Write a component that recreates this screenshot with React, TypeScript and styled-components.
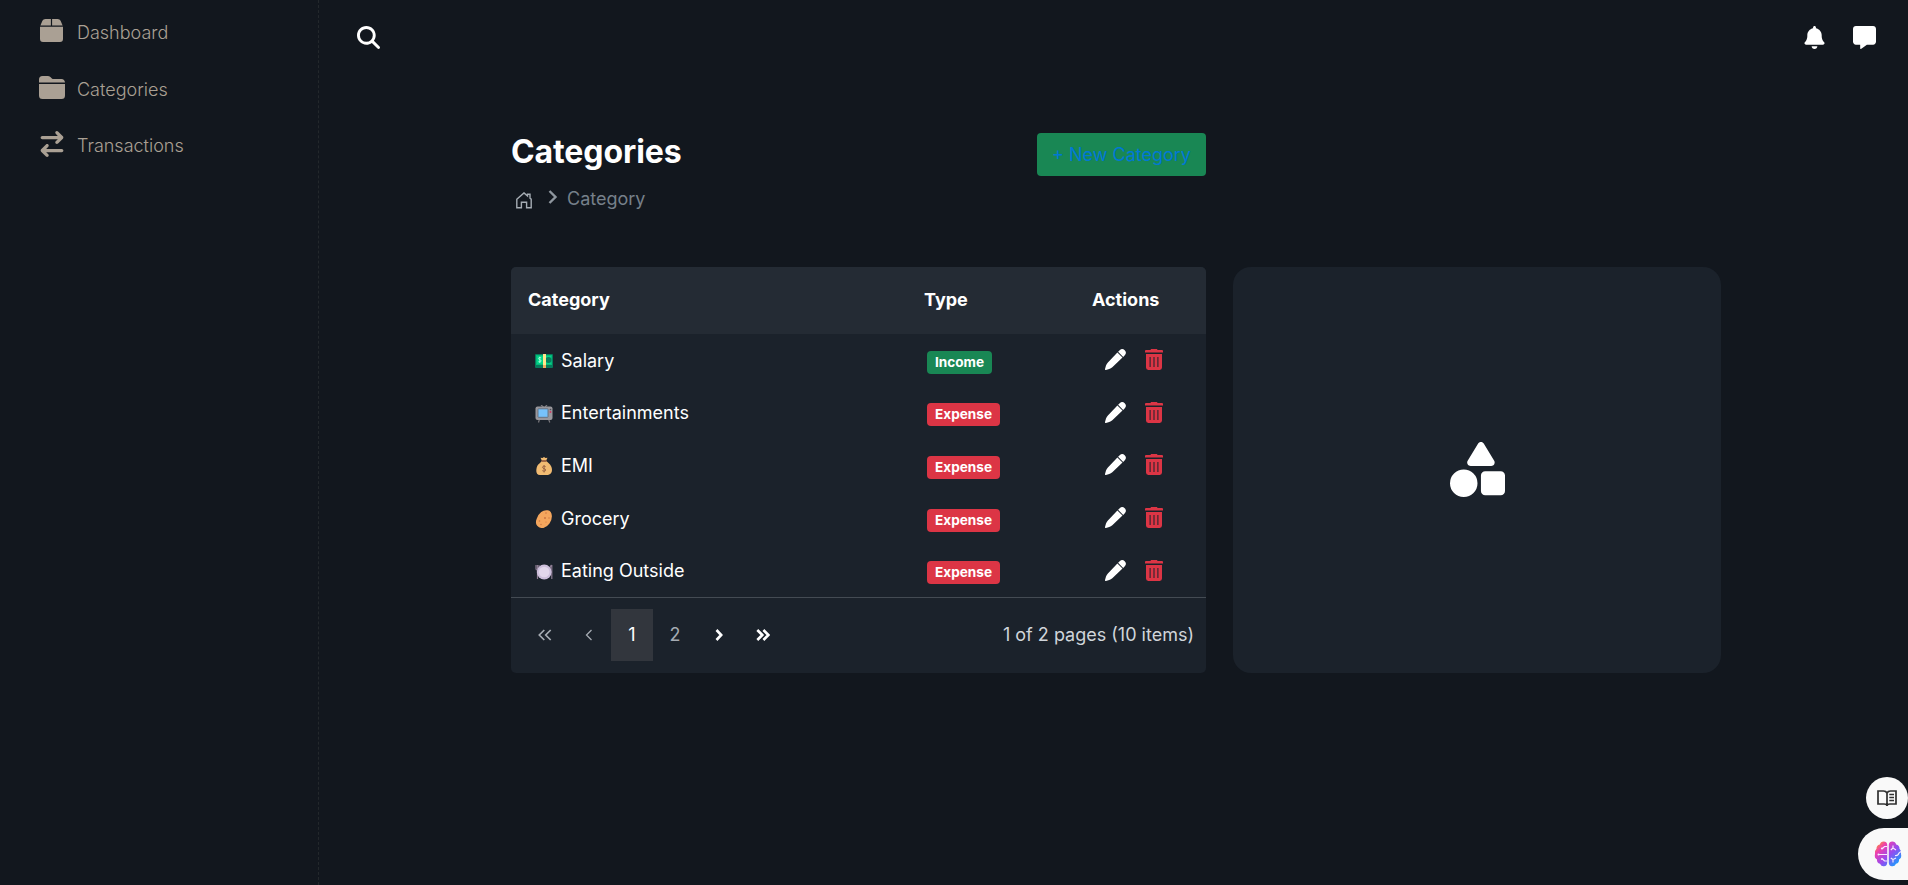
import React from "react";
import styled, { createGlobalStyle } from "styled-components";
import { FaMagnifyingGlass, FaBell, FaMessage, FaArrowRightArrowLeft, FaShapes } from "react-icons/fa6";

const GlobalStyle = createGlobalStyle`
  * { box-sizing: border-box; }
  body {
    margin: 0;
    background: #12171e;
    color: #fff;
    font-family: Inter, "Liberation Sans", sans-serif;
    font-size: 18px;
    overflow: hidden;
  }
`;

const Page = styled.div`
  display: flex;
  height: 885px;
`;

const Sidebar = styled.nav`
  width: 319px;
  padding: 4px 0 0 38px;
  border-right: 1px dashed #23282c;
`;

const NavItem = styled.a`
  display: flex;
  align-items: center;
  height: 56.5px;
  color: #aaa094;
  font-weight: 300;
  line-height: 27px;
`;

const NavIcon = styled.span`
  display: flex;
  justify-content: center;
  width: 27px;
  margin: 0 12px 3px 0;
`;

const NavLabel = styled.span<{ $drop?: boolean }>`
  padding-top: ${(p) => (p.$drop ? 2 : 0)}px;
`;

const Main = styled.main`
  flex: 1;
  display: flex;
  flex-direction: column;
`;

const TopBar = styled.header`
  display: flex;
  justify-content: space-between;
  padding: 26px 32px 0 38px;
  height: 133px;
`;

const TopActions = styled.div`
  display: flex;
  gap: 27px;
  height: 23px;
`;

const Content = styled.div`
  width: 1210px;
  margin-left: 192px;
`;

const Heading = styled.div`
  display: flex;
  justify-content: space-between;
  align-items: flex-start;
  width: 695px;
  height: 134px;
`;

const Title = styled.h1`
  margin: 0;
  font-size: 32px;
  line-height: 38px;
  font-weight: 700;
  letter-spacing: -0.1px;
`;

const Breadcrumb = styled.div`
  display: flex;
  align-items: center;
  height: 27px;
  margin-top: 14px;
  padding-left: 5px;
  color: #76808a;
`;

const Crumb = styled.span`
  margin-left: 9px;
`;

const NewButton = styled.button`
  width: 169px;
  height: 43px;
  padding: 0;
  border: 0;
  border-radius: 4px;
  background: #198754;
  color: #0078d6;
  font: 400 18px Inter, sans-serif;
`;

const Columns = styled.div`
  display: flex;
  gap: 27px;
  height: 406px;
`;

const TableCard = styled.section`
  width: 695px;
  border-radius: 5px;
  overflow: hidden;
  background: #1b222b;
`;

const Row = styled.div`
  display: grid;
  grid-template-columns: 412px 169px 114px;
  align-items: center;
  height: 52.6px;
`;

const HeadRow = styled(Row)`
  height: 67px;
  background: #242b34;
  font-weight: 700;
  padding-bottom: 2px;
`;

const HeadCell = styled.div<{ $pad: number }>`
  padding-left: ${(p) => p.$pad}px;
`;

const NameCell = styled.div`
  display: flex;
  align-items: center;
  gap: 8px;
  padding-left: 24px;
`;

const Badge = styled.span<{ $income: boolean }>`
  display: inline-block;
  margin: 4px 0 0 4px;
  padding: 0 8px;
  border-radius: 4px;
  font-size: 13.6px;
  font-weight: 700;
  line-height: 23px;
  vertical-align: top;
  background: ${(p) => (p.$income ? "#198754" : "#dc3545")};
`;

const Actions = styled.div`
  display: flex;
  gap: 19px;
  padding: 0 0 1px 13px;
`;

const Pager = styled.div`
  display: flex;
  align-items: center;
  height: 76px;
  border-top: 1px solid #444b53;
  padding: 0 12px 1px;
`;

const PageButton = styled.button<{ $active?: boolean; $dim?: boolean }>`
  display: flex;
  align-items: center;
  justify-content: center;
  width: ${(p) => (p.$active ? 42 : 44)}px;
  height: 52px;
  padding: 0;
  border: 0;
  background: ${(p) => (p.$active ? "#32363d" : "transparent")};
  color: ${(p) => (p.$dim ? "#a5abb2" : "#fff")};
  font: 400 18px Inter, sans-serif;
`;

const PageInfo = styled.span`
  margin-left: auto;
  color: #d0d5da;
`;

const EmptyCard = styled.section`
  display: flex;
  align-items: center;
  justify-content: center;
  width: 488px;
  padding: 0 0 2px 0;
  border-radius: 18px;
  background: #1b222b;
`;

const Floating = styled.aside`
  position: fixed;
  right: 0;
  top: 777px;
  display: flex;
  flex-direction: column;
  align-items: flex-end;
  gap: 9px;
`;

const BookButton = styled.div`
  display: flex;
  align-items: center;
  justify-content: center;
  width: 42px;
  height: 42px;
  border-radius: 50%;
  background: #f9f9f9;
`;

const BrainButton = styled.div`
  display: flex;
  align-items: center;
  width: 50px;
  height: 52px;
  padding-left: 16px;
  border-radius: 26px 0 0 26px;
  background: #f9f9f9;
`;

const BoxIcon = () => (
  <svg width="23" height="23" viewBox="0 0 23 23" fill="currentColor">
    <path d="M5.4 0H10.9V6.5H.4L2.4 1.8Q3.2 0 5.4 0ZM12.1 0H17.6Q19.8 0 20.6 1.8L22.6 6.5H12.1ZM0 7.7H23V20Q23 23 20 23H3Q0 23 0 20Z" />
  </svg>
);

const FolderIcon = () => (
  <svg width="26" height="23" viewBox="0 0 26 23" fill="currentColor">
    <path d="M0 6.6V3.5Q0 0 3.5 0H8.7Q10.3 0 11.4 1L12.9 2.4Q13.6 3 14.6 3H22.5Q25.6 3 26 6.6ZM0 8H26V19.5Q26 23 22.5 23H3.5Q0 23 0 19.5Z" />
  </svg>
);

const HomeIcon = () => (
  <svg width="16" height="17" viewBox="0 0 16 17" fill="none" stroke="#a5acb3" strokeWidth="1.4">
    <path d="M.8 7.2 8 .9 11.5 4V2.2H14V6.2L15.2 7.2V15.8H10.6V10.2H5.4V15.8H.8Z" />
  </svg>
);

const CrumbArrow = styled.svg`
  margin: 0 0 3px 16px;
`;

const HomeWrap = styled.span`
  display: flex;
  margin-top: 3px;
`;

const PencilIcon = () => (
  <svg width="21" height="21" viewBox="0 0 21 21" fill="#fff">
    <path d="M12.4 3.5 17.5 8.6 7.3 18.3Q6 19.6 4.2 20.1L1 21Q-.2 21.2 0 20L1 16.6Q1.6 14.8 2.9 13.5Z" />
    <path d="M13.1 2.8 14.7 1.2Q17.3-1.1 19.7 1.3T19.8 6.3L18.2 7.9Z" />
  </svg>
);

const TrashIcon = () => (
  <svg width="18" height="21" viewBox="0 0 18 21" fill="#dc3545">
    <path d="M5.3 1 6.2 0H11.8L12.7 1H17Q18 1 18 2V3.6H0V2Q0 1 1 1Z" />
    <path fillRule="evenodd" d="M1 5H17V18.6Q17 21 14.6 21H3.4Q1 21 1 18.6ZM4.6 8V18H5.6V8ZM8.5 8V18H9.5V8ZM12.4 8V18H13.4V8Z" />
  </svg>
);

const Chevrons = ({ left, double, bold }: { left?: boolean; double?: boolean; bold?: boolean }) => (
  <svg width={double ? 14 : 8} height="12" viewBox={`0 0 ${double ? 14 : 8} 12`} fill="none" stroke="currentColor" strokeWidth={bold ? 2.6 : double ? 1.7 : 1.3}>
    {left ? (
      <path d={double ? "M6.3 1 1.3 6 6.3 11M12.7 1 7.7 6 12.7 11" : "M6.5 1 1.5 6 6.5 11"} />
    ) : (
      <path d={double ? "M1.3 1 6.3 6 1.3 11M7.4 1 12.4 6 7.4 11" : "M1.5 1 6.2 6 1.5 11"} />
    )}
  </svg>
);

const emojis: Record<string, React.ReactNode> = {
  money: (
    <>
      <rect x="0" y="2" width="18" height="14" rx="1" fill="#067a5b" />
      <rect x="1" y="3" width="16" height="10" fill="#00d487" />
      <rect x="1.5" y="3.5" width="15" height="9" fill="none" stroke="#04b979" />
      <circle cx="13.5" cy="8" r="3" fill="#087d5d" />
      <rect x="8" y="2" width="3" height="11" fill="#ffe58c" />
      <rect x="8" y="13" width="3" height="3" fill="#f3ad61" />
      <path d="M6.2 5.8Q3.3 4.7 3.5 6.8C3.7 8.2 6.2 7.2 6.2 9Q6 10.5 3.4 9.7M4.8 4.7V11" fill="none" stroke="#b8ffe0" strokeWidth=".8" />
    </>
  ),
  tv: (
    <>
      <path d="M8.5 2 6 0M10 2 12 0M4.5 14 3.5 17.5M13.5 14 14.8 17.5" stroke="#77767b" strokeWidth="1.2" />
      <rect x=".5" y="1.5" width="17" height="13.5" rx="2" fill="#99979c" />
      <rect x="3" y="3.8" width="10" height="8.5" rx=".5" fill="#77c2fa" stroke="#5d6472" strokeWidth=".8" />
      <circle cx="15.5" cy="4.5" r=".8" fill="#4f4f57" />
      <circle cx="15.5" cy="7" r=".9" fill="#d33b65" />
    </>
  ),
  bag: (
    <>
      <path d="M5.5.8 7.5 1.1 9 0 10.5 1.1 12.5.8 11 4H7Z" fill="#f1bb72" />
      <path d="M7 3.8H11L13.5 6Q17 9 17 13T13 18H5Q1 18 1.3 13T5 6Z" fill="#f1bb72" />
      <path d="M6.5 4H11.5" stroke="#854c37" strokeWidth="1.6" />
      <path d="M10.7 9.7C9.8 8.9 7.5 9 7.5 10.4 7.5 11.8 10.7 11.3 10.7 13 10.7 14.5 8.2 14.4 7.3 13.6M9.1 8V15.5" fill="none" stroke="#945d40" strokeWidth=".9" />
    </>
  ),
  potato: (
    <>
      <path d="M6.2 2Q9-.3 12.8.3T16.9 6Q17 10 14.5 13.5T8.5 18Q4.5 18.5 2.2 15.8T1.7 8.7Q3 4.5 6.2 2Z" fill="#f4a65d" />
      <g fill="#cc7540"><circle cx="11" cy="3" r=".8" /><circle cx="10" cy="8" r="1" /><circle cx="4.5" cy="11" r=".8" /><circle cx="14" cy="8" r=".7" /><circle cx="6" cy="14.5" r=".7" /><circle cx="11" cy="12" r=".6" /></g>
    </>
  ),
  plate: (
    <>
      <path d="M1 2V6Q1 7 2.5 7V16M4 2V6Q4 7 2.5 7M2.5 2V6M16.8 2V16M16.5 2Q14.7 3.5 15 9H16.5" fill="none" stroke="#8b7b91" strokeWidth="1.2" />
      <circle cx="9.2" cy="9" r="7.4" fill="#cdbfdb" />
      <circle cx="9.2" cy="9" r="5.3" fill="#e2d7eb" />
    </>
  ),
};

const Emoji = styled.svg`
  width: 18px;
  height: 18px;
  margin-top: 2px;
`;

const BookIcon = () => (
  <svg width="20" height="17" viewBox="0 0 20 17" fill="none" stroke="#303030" strokeWidth="1.7">
    <path d="M10 3Q9 1 6.5 1H1V14H7Q10 14 10 16Q10 14 13 14H19V1H13.5Q11 1 10 3ZM10 3V15" />
    <path d="M12.3 4.4H17M12.3 7.4H17M12.3 10.4H17" strokeWidth="1.5" />
  </svg>
);

const BrainIcon = () => (
  <svg width="28" height="26" viewBox="0 0 28 26" fill="none">
    <defs>
      <linearGradient id="brain" x1="2" y1="2" x2="24" y2="24" gradientUnits="userSpaceOnUse">
        <stop stopColor="#ff9a28" />
        <stop offset=".24" stopColor="#ed3fb0" />
        <stop offset=".58" stopColor="#954bf0" />
        <stop offset="1" stopColor="#10a4ff" />
      </linearGradient>
    </defs>
    <g fill="url(#brain)">
      <path d="M13.2 3.4Q12.8.5 9.7.5 6.6.5 5.8 3.5 2.4 4.2 2.5 7.8.4 9.6 1 13 0 17 3 18.5 2.6 22 6 22.7 7.2 25.5 10 25.2 13.2 25 13.2 21.5Z" />
      <path d="M14.8 3.4Q15.2.5 18.3.5 21.4.5 22.2 3.5 25.6 4.2 25.5 7.8 27.6 9.6 27 13 28 17 25 18.5 25.4 22 22 22.7 20.8 25.5 18 25.2 14.8 25 14.8 21.5Z" />
    </g>
    <path d="M13 5.5H10.5L8.5 7.5M4 13.5H13M13 20H10.5L8.5 18M19 4.5V7L22 9M19 7 16.8 9M21 14.5Q24 15 25 12L27 10.5M19 21.5V18.5L22 17M19 18.5 16.8 17" stroke="#f8eaff" strokeWidth="1.15" />
    <g fill="#f8eaff"><circle cx="8" cy="7.5" r="1.1" /><circle cx="4.5" cy="13.5" r="1" /><circle cx="8" cy="18" r="1.1" /></g>
  </svg>
);

const categories = [
  { name: "Salary", type: "Income", icon: "money" },
  { name: "Entertainments", type: "Expense", icon: "tv" },
  { name: "EMI", type: "Expense", icon: "bag" },
  { name: "Grocery", type: "Expense", icon: "potato" },
  { name: "Eating Outside", type: "Expense", icon: "plate" },
];

export default function App() {
  return (
    <>
      <GlobalStyle />
      <Page>
        <Sidebar>
          <NavItem><NavIcon><BoxIcon /></NavIcon><NavLabel>Dashboard</NavLabel></NavItem>
          <NavItem><NavIcon><FolderIcon /></NavIcon><NavLabel $drop>Categories</NavLabel></NavItem>
          <NavItem><NavIcon><FaArrowRightArrowLeft size={26} /></NavIcon><NavLabel>Transactions</NavLabel></NavItem>
        </Sidebar>
        <Main>
          <TopBar>
            <FaMagnifyingGlass size={23} />
            <TopActions><FaBell size={23} /><FaMessage size={23} /></TopActions>
          </TopBar>
          <Content>
            <Heading>
              <div>
                <Title>Categories</Title>
                <Breadcrumb>
                  <HomeWrap><HomeIcon /></HomeWrap>
                  <CrumbArrow width="10" height="14" viewBox="0 0 10 14" fill="none" stroke="#8e969e" strokeWidth="2.4">
                    <path d="M1.5 1 7.5 7 1.5 13" />
                  </CrumbArrow>
                  <Crumb>Category</Crumb>
                </Breadcrumb>
              </div>
              <NewButton>+ New Category</NewButton>
            </Heading>
            <Columns>
              <TableCard>
                <HeadRow>
                  <HeadCell $pad={17}>Category</HeadCell>
                  <HeadCell $pad={1}>Type</HeadCell>
                  <HeadCell $pad={0}>Actions</HeadCell>
                </HeadRow>
                {categories.map((c) => (
                  <Row key={c.name}>
                    <NameCell><Emoji viewBox="0 0 18 18">{emojis[c.icon]}</Emoji>{c.name}</NameCell>
                    <div><Badge $income={c.type === "Income"}>{c.type}</Badge></div>
                    <Actions><PencilIcon /><TrashIcon /></Actions>
                  </Row>
                ))}
                <Pager>
                  <PageButton $dim><Chevrons left double /></PageButton>
                  <PageButton $dim><Chevrons left /></PageButton>
                  <PageButton $active>1</PageButton>
                  <PageButton $dim>2</PageButton>
                  <PageButton><Chevrons bold /></PageButton>
                  <PageButton><Chevrons double bold /></PageButton>
                  <PageInfo>1 of 2 pages (10 items)</PageInfo>
                </Pager>
              </TableCard>
              <EmptyCard><FaShapes size={55} /></EmptyCard>
            </Columns>
          </Content>
        </Main>
      </Page>
      <Floating>
        <BookButton><BookIcon /></BookButton>
        <BrainButton><BrainIcon /></BrainButton>
      </Floating>
    </>
  );
}
